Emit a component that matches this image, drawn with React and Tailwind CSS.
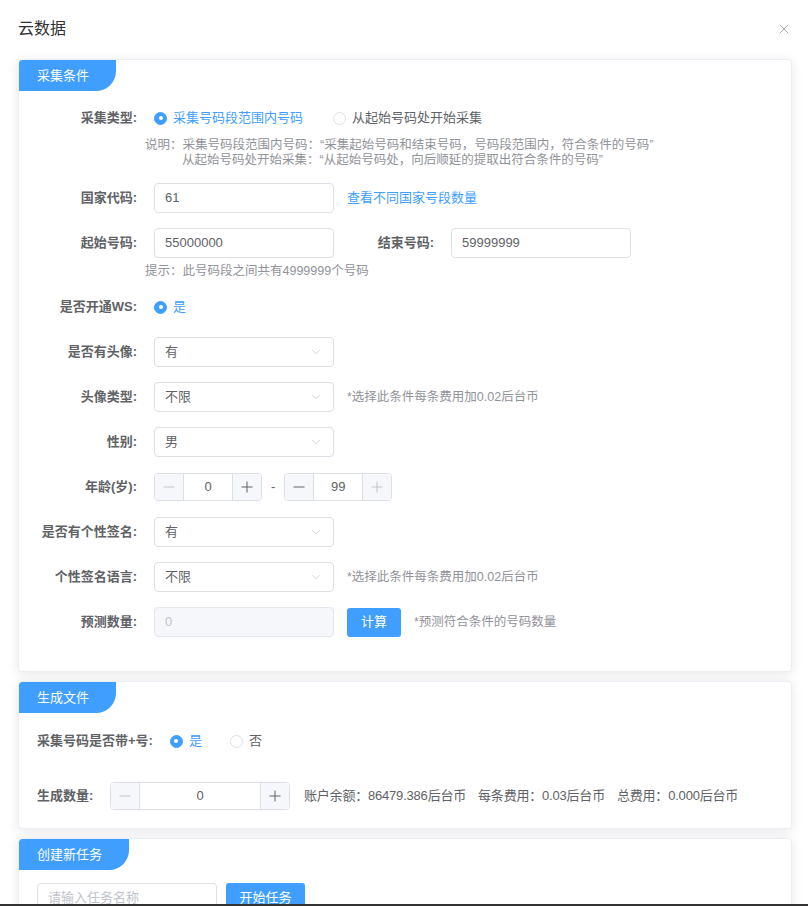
import React from "react";
import { X, ChevronDown } from "lucide-react";

const FONT = { fontFamily: '"Liberation Sans", "Noto Sans CJK SC", sans-serif' };

function Tab({ children }) {
    return (
        <div className="flex">
            <div className="h-[31px] flex items-center pl-[18px] pr-[27px] bg-[#409eff] text-white text-[13px] rounded-tl-[3px] rounded-br-[20px]">
                {children}
            </div>
        </div>
    );
}

function Radio({ checked, children }) {
    return (
        <div className="flex items-center">
            {checked ? (
                <span className="w-[13px] h-[13px] rounded-full bg-[#409eff] border border-[#409eff] flex items-center justify-center">
                    <span className="w-[4px] h-[4px] rounded-full bg-white" />
                </span>
            ) : (
                <span className="w-[13px] h-[13px] rounded-full bg-white border border-[#dcdfe6]" />
            )}
            <span
                className={
                    checked
                        ? "ml-[6px] text-[13px] text-[#409eff]"
                        : "ml-[6px] text-[13px] text-[#606266]"
                }
            >
                {children}
            </span>
        </div>
    );
}

function TextBox({ value, placeholder }) {
    return (
        <div className="w-[180px] h-[30px] border border-[#dcdfe6] rounded-[4px] bg-white flex items-center px-[10px] text-[13px] text-[#606266]">
            {value ? value : <span className="text-[#c0c4cc]">{placeholder}</span>}
        </div>
    );
}

function Select({ value }) {
    return (
        <div className="w-[180px] h-[30px] border border-[#dcdfe6] rounded-[4px] bg-white flex items-center justify-between pl-[10px] pr-[10px] text-[13px] text-[#606266]">
            <span>{value}</span>
            <ChevronDown size={14} strokeWidth={1.2} color="#c0c4cc" />
        </div>
    );
}

function Minus({ off }) {
    return (
        <svg width="12" height="12" viewBox="0 0 12 12">
            <path d="M0.5 6h11" stroke={off ? "#c0c4cc" : "#606266"} strokeWidth="1" />
        </svg>
    );
}

function Plus({ off }) {
    return (
        <svg width="12" height="12" viewBox="0 0 12 12">
            <path
                d="M0.5 6h11M6 0.5v11"
                stroke={off ? "#c0c4cc" : "#606266"}
                strokeWidth="1"
            />
        </svg>
    );
}

function NumberBox({ value, wide, minusOff, plusOff }) {
    return (
        <div
            className={
                wide
                    ? "w-[180px] h-[28px] flex border border-[#dcdfe6] rounded-[4px] overflow-hidden bg-white"
                    : "w-[108px] h-[28px] flex border border-[#dcdfe6] rounded-[4px] overflow-hidden bg-white"
            }
        >
            <div className="w-[29px] bg-[#f5f7fa] border-r border-[#dcdfe6] flex items-center justify-center">
                <Minus off={minusOff} />
            </div>
            <div className="flex-1 flex items-center justify-center text-[13px] text-[#606266]">
                {value}
            </div>
            <div className="w-[29px] bg-[#f5f7fa] border-l border-[#dcdfe6] flex items-center justify-center">
                <Plus off={plusOff} />
            </div>
        </div>
    );
}

function Row({ label, children }) {
    return (
        <div className="flex items-center h-[30px] mb-[15px]">
            <label className="w-[117px] pr-[17px] text-right font-bold text-[13px] text-[#606266] whitespace-nowrap">
                {label}
            </label>
            {children}
        </div>
    );
}

const Note = ({ children }) => (
    <span className="ml-[13px] text-[12.5px] text-[#909399]">{children}</span>
);

export default function App() {
    return (
        <div className="h-[906px] w-[808px] bg-white flex flex-col overflow-hidden" style={FONT}>
            <div className="flex-1 overflow-hidden">
                <div className="h-[57px] flex items-center justify-between pl-[18px] pr-[16px]">
                    <h1 className="text-[16px] text-[#303133]">云数据</h1>
                    <X size={16} strokeWidth={1.2} color="#909399" />
                </div>

                <div className="pl-[18px] pr-[16px] mt-[2px]">
                    {/* 采集条件 */}
                    <div className="bg-white border border-[#ebeef5] rounded-[4px] shadow-[0_2px_12px_0_rgba(0,0,0,0.1)] overflow-hidden">
                        <Tab>采集条件</Tab>
                        <div className="pl-[18px] pt-[12px] pb-[19px]">
                            <div className="flex items-center h-[30px]">
                                <label className="w-[117px] pr-[17px] text-right font-bold text-[13px] text-[#606266]">
                                    采集类型:
                                </label>
                                <div className="flex items-center gap-[30px]">
                                    <Radio checked>采集号码段范围内号码</Radio>
                                    <Radio>从起始号码处开始采集</Radio>
                                </div>
                            </div>
                            <div className="ml-[108px] mt-[5px] mb-[15px] text-[12.5px] leading-[15px] text-[#909399]">
                                <p>说明：采集号码段范围内号码：“采集起始号码和结束号码，号码段范围内，符合条件的号码”</p>
                                <p className="pl-[37px]">从起始号码处开始采集：“从起始号码处，向后顺延的提取出符合条件的号码”</p>
                            </div>

                            <Row label="国家代码:">
                                <TextBox value="61" />
                                <span className="ml-[13px] text-[13px] text-[#409eff]">查看不同国家号段数量</span>
                            </Row>

                            <div className="flex items-center h-[30px]">
                                <label className="w-[117px] pr-[17px] text-right font-bold text-[13px] text-[#606266]">
                                    起始号码:
                                </label>
                                <TextBox value="55000000" />
                                <label className="w-[117px] pr-[17px] text-right font-bold text-[13px] text-[#606266]">
                                    结束号码:
                                </label>
                                <TextBox value="59999999" />
                            </div>
                            <p className="ml-[108px] mt-[6px] mb-[13px] text-[12.5px] leading-[15px] text-[#909399]">
                                提示：此号码段之间共有4999999个号码
                            </p>

                            <Row label="是否开通WS:">
                                <Radio checked>是</Radio>
                            </Row>
                            <Row label="是否有头像:">
                                <Select value="有" />
                            </Row>
                            <Row label="头像类型:">
                                <Select value="不限" />
                                <Note>*选择此条件每条费用加0.02后台币</Note>
                            </Row>
                            <Row label="性别:">
                                <Select value="男" />
                            </Row>
                            <Row label="年龄(岁):">
                                <NumberBox value="0" minusOff />
                                <span className="mx-[9px] text-[13px] text-[#606266]">-</span>
                                <NumberBox value="99" plusOff />
                            </Row>
                            <Row label="是否有个性签名:">
                                <Select value="有" />
                            </Row>
                            <Row label="个性签名语言:">
                                <Select value="不限" />
                                <Note>*选择此条件每条费用加0.02后台币</Note>
                            </Row>
                            <Row label="预测数量:">
                                <div className="w-[180px] h-[30px] border border-[#e4e7ed] rounded-[4px] bg-[#f5f7fa] flex items-center px-[10px] text-[13px] text-[#c0c4cc]">
                                    0
                                </div>
                                <button className="ml-[13px] w-[54px] h-[29px] rounded-[3px] bg-[#409eff] text-white text-[13px]">
                                    计算
                                </button>
                                <Note>*预测符合条件的号码数量</Note>
                            </Row>
                        </div>
                    </div>

                    {/* 生成文件 */}
                    <div className="mt-[9px] bg-white border border-[#ebeef5] rounded-[4px] shadow-[0_2px_12px_0_rgba(0,0,0,0.1)] overflow-hidden">
                        <Tab>生成文件</Tab>
                        <div className="pl-[18px] pt-[13px] pb-[17px]">
                            <div className="flex items-center h-[30px] mb-[25px]">
                                <label className="pr-[17px] font-bold text-[13px] text-[#606266]">
                                    采集号码是否带+号:
                                </label>
                                <div className="flex items-center gap-[28px]">
                                    <Radio checked>是</Radio>
                                    <Radio>否</Radio>
                                </div>
                            </div>
                            <div className="flex items-center h-[30px]">
                                <label className="w-[73px] font-bold text-[13px] text-[#606266]">生成数量:</label>
                                <NumberBox value="0" wide minusOff />
                                <div className="ml-[14px] flex gap-[12px] text-[13px] text-[#606266] tracking-[-0.2px]">
                                    <span>账户余额：86479.386后台币</span>
                                    <span>每条费用：0.03后台币</span>
                                    <span>总费用：0.000后台币</span>
                                </div>
                            </div>
                        </div>
                    </div>

                    {/* 创建新任务 */}
                    <div className="mt-[9px] bg-white border border-[#ebeef5] rounded-[4px] shadow-[0_2px_12px_0_rgba(0,0,0,0.1)] overflow-hidden">
                        <Tab>创建新任务</Tab>
                        <div className="pl-[18px] pt-[13px] pb-[18px] flex items-center gap-[9px]">
                            <TextBox placeholder="请输入任务名称" />
                            <button className="w-[79px] h-[30px] rounded-[3px] bg-[#409eff] text-white text-[13px]">
                                开始任务
                            </button>
                        </div>
                    </div>
                </div>
            </div>
            <div className="h-[2px] bg-[#333333]" />
        </div>
    );
}
